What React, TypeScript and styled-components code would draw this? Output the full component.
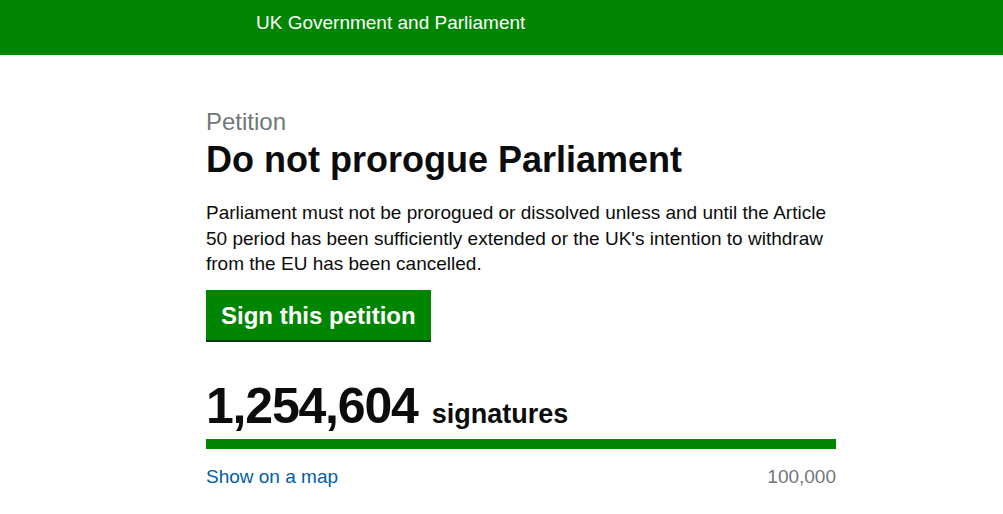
import styled, { createGlobalStyle } from "styled-components";

const GlobalStyle = createGlobalStyle`
  html, body {
    margin: 0;
    padding: 0;
    background: #ffffff;
    font-family: "Liberation Sans", Arial, sans-serif;
    color: #0b0c0c;
  }
`;

const Header = styled.header`
  background: #008500;
  height: 55px;
  box-sizing: border-box;
  padding: 11px 0 0 256px;
`;

const HeaderTitle = styled.div`
  color: #ffffff;
  font-size: 19px;
  line-height: 24px;
`;

const Main = styled.main`
  width: 630px;
  margin-left: 206px;
  padding-top: 53px;
`;

const Caption = styled.div`
  color: #6f777b;
  font-size: 24px;
  line-height: 28px;
`;

const Heading = styled.h1`
  margin: 4px 0 0;
  font-size: 36px;
  line-height: 40px;
  font-weight: 700;
`;

const Summary = styled.p`
  margin: 20px 0 0;
  font-size: 19px;
  line-height: 25.5px;
`;

const SignButton = styled.button`
  margin-top: 13px;
  background: #008500;
  color: #ffffff;
  border: 0;
  box-shadow: 0 2px 0 #003618;
  font-family: "Liberation Sans", Arial, sans-serif;
  font-weight: 700;
  font-size: 24px;
  line-height: 28px;
  padding: 12px 15px 10px;
  cursor: pointer;
`;

const CountRow = styled.div`
  margin-top: 40px;
  display: flex;
  align-items: baseline;
  gap: 14px;
`;

const Count = styled.span`
  font-weight: 700;
  font-size: 50px;
  line-height: 52px;
  letter-spacing: -1.2px;
`;

const CountLabel = styled.span`
  font-weight: 700;
  font-size: 27px;
`;

const Bar = styled.div`
  margin-top: 7px;
  height: 10px;
  background: #e6e6e6;
`;

const BarFill = styled.div`
  height: 100%;
  background: #008500;
`;

const FootRow = styled.div`
  margin-top: 15px;
  display: flex;
  justify-content: space-between;
  font-size: 19px;
  line-height: 25px;
`;

const MapLink = styled.a`
  color: #005ea5;
  text-decoration: none;
`;

const Threshold = styled.span`
  color: #6f777b;
`;

export default function App() {
  const signatures = 1254604;
  const threshold = 100000;
  const pct = Math.min(100, (signatures / threshold) * 100);
  return (
    <>
      <GlobalStyle />
      <Header>
        <HeaderTitle>UK Government and Parliament</HeaderTitle>
      </Header>
      <Main>
        <Caption>Petition</Caption>
        <Heading>Do not prorogue Parliament</Heading>
        <Summary>
          Parliament must not be prorogued or dissolved unless and until the Article
          50 period has been sufficiently extended or the UK's intention to withdraw
          from the EU has been cancelled.
        </Summary>
        <SignButton>Sign this petition</SignButton>
        <CountRow>
          <Count>{signatures.toLocaleString("en-GB")}</Count>
          <CountLabel>signatures</CountLabel>
        </CountRow>
        <Bar>
          <BarFill style={{ width: `${pct}%` }} />
        </Bar>
        <FootRow>
          <MapLink href="#">Show on a map</MapLink>
          <Threshold>{threshold.toLocaleString("en-GB")}</Threshold>
        </FootRow>
      </Main>
    </>
  );
}
